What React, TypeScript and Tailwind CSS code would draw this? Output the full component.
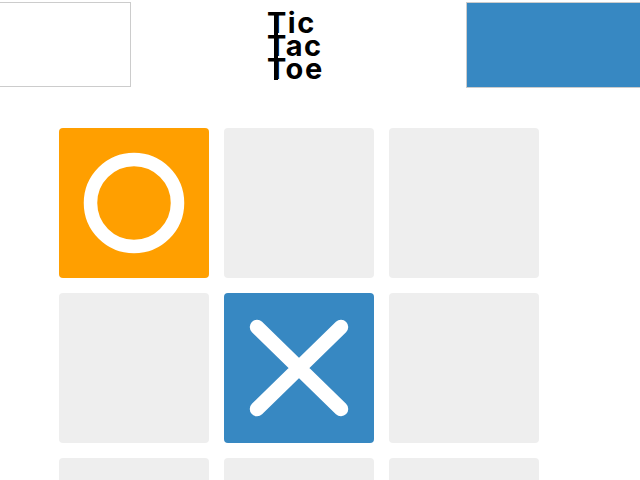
const cells: ("o" | "x" | null)[] = ["o", null, null, null, "x", null, null, null, null]

function Ring() {
  return (
    <svg viewBox="0 0 150 150" className="h-full w-full">
      <circle cx="75" cy="75" r="43.5" fill="none" stroke="#fff" strokeWidth="13.5" />
    </svg>
  )
}

function Cross() {
  return (
    <svg viewBox="0 0 150 150" className="h-full w-full">
      <path d="M33 34 L117 116 M117 34 L33 116" stroke="#fff" strokeWidth="14.5" strokeLinecap="round" />
    </svg>
  )
}

function Logo() {
  return (
    <div className="relative flex flex-col text-[29px] font-bold leading-[23px] tracking-[1.5px] text-black font-['Inter',sans-serif]">
      {/* one long stem joins the three T's */}
      <span className="absolute left-[7px] top-[1px] h-[68px] w-[4px] bg-black" />
      <span>Tic</span>
      <span>Tac</span>
      <span>Toe</span>
    </div>
  )
}

export default function App() {
  return (
    <div className="h-[480px] w-[640px] overflow-hidden bg-white">
      <header className="flex items-start pt-[2px]">
        <div className="-ml-px h-[85px] w-[132px] border border-[#cccccc] bg-white" />
        <div className="ml-[136px] pt-[9px]">
          <Logo />
        </div>
        <div className="-mr-[4px] ml-auto h-[86px] w-[178px] border border-[#cccccc] bg-[#3788c2]" />
      </header>

      <main className="ml-[59px] mt-[40px] grid w-[480px] grid-cols-3 gap-[15px]">
        {cells.map((c, i) => (
          <div
            key={i}
            className={
              "h-[150px] w-[150px] rounded-[4px] " +
              (c === "o" ? "bg-[#ff9f00]" : c === "x" ? "bg-[#3788c2]" : "bg-[#eeeeee]")
            }
          >
            {c === "o" && <Ring />}
            {c === "x" && <Cross />}
          </div>
        ))}
      </main>
    </div>
  )
}
